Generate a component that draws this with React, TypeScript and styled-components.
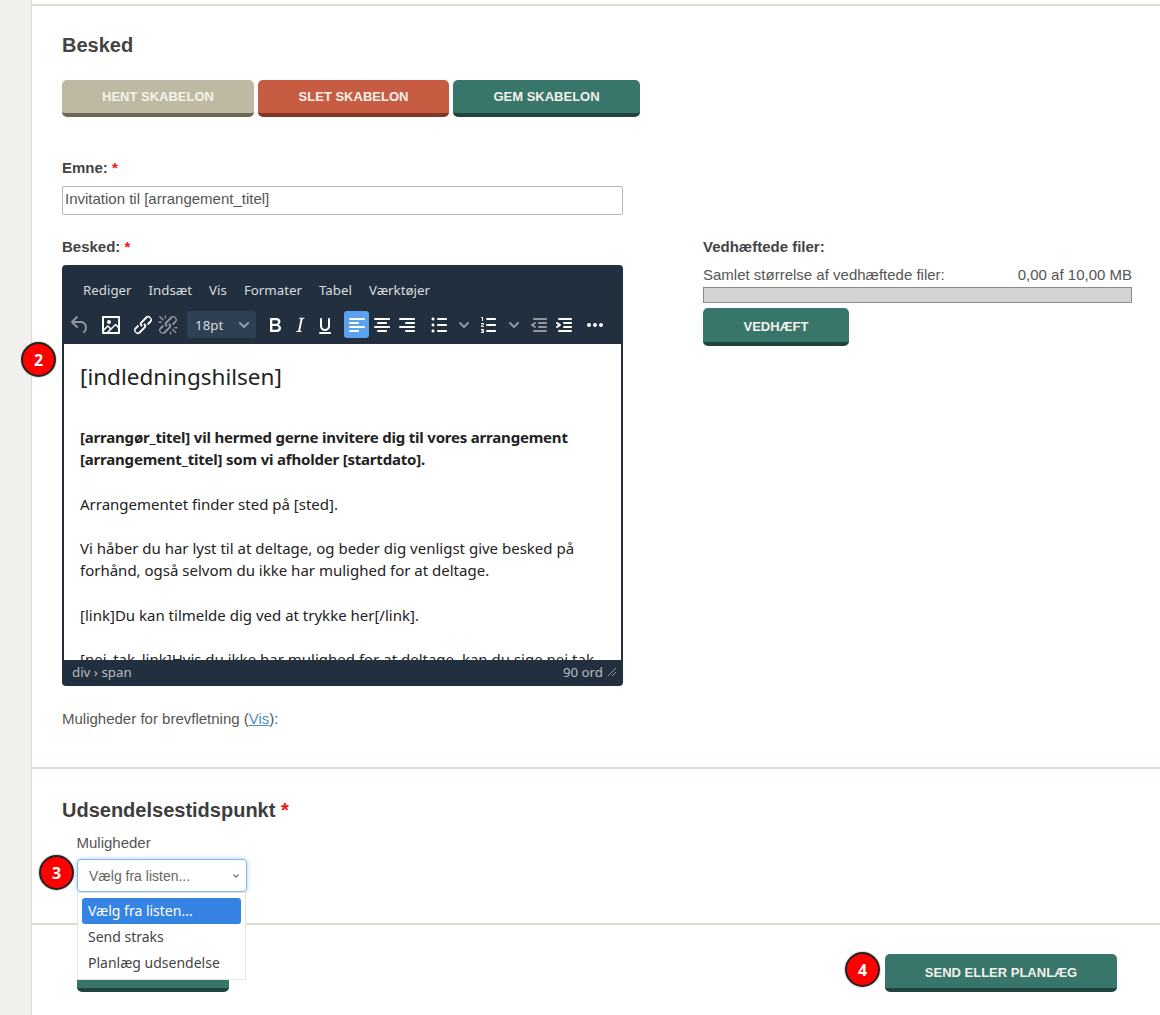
import styled, { createGlobalStyle } from 'styled-components';

const GlobalStyle = createGlobalStyle`
  html, body { margin: 0; padding: 0; background: #fff; }
  body { font-family: "Liberation Sans", Arial, sans-serif; color: #444; overflow: hidden; }
  * { box-sizing: border-box; }
`;

const ICONS: Record<string, string> = {
  undo: 'M6.4 8H12c3.7 0 6.2 2 6.8 5.1.6 2.7-.4 5.6-2.3 6.8a1 1 0 0 1-1-1.8c1.1-.6 1.8-2.7 1.4-4.6-.5-2.1-2.1-3.5-4.9-3.5H6.4l3.3 3.3a1 1 0 1 1-1.4 1.4l-5-5a1 1 0 0 1 0-1.4l5-5a1 1 0 0 1 1.4 1.4L6.4 8Z',
  image: 'm5 15.7 3.3-3.2c.3-.3.7-.3 1 0L12 15l4.1-4c.3-.4.8-.4 1 0l2 1.9V5H5v10.7ZM5 18V19h3l2.8-2.9-2-2L5 17.9Zm14-3-2.5-2.4-6.4 6.5H19v-4ZM4 3h16c.6 0 1 .4 1 1v16c0 .6-.4 1-1 1H4a1 1 0 0 1-1-1V4c0-.6.4-1 1-1Zm6 8a2 2 0 1 0 0-4 2 2 0 0 0 0 4Z',
  link: 'M6.2 12.3a1 1 0 0 1 1.4 1.4l-2 2a2 2 0 1 0 2.6 2.8l4.8-4.8a1 1 0 0 0 0-1.4 1 1 0 1 1 1.4-1.3 2.9 2.9 0 0 1 0 4L9.6 20a3.9 3.9 0 0 1-5.5-5.5l2-2Zm11.6-.6a1 1 0 0 1-1.4-1.4l2-2a2 2 0 1 0-2.6-2.8L11 10.3a1 1 0 0 0 0 1.4A1 1 0 1 1 9.6 13a2.9 2.9 0 0 1 0-4L14.4 4a3.9 3.9 0 0 1 5.5 5.5l-2 2Z',
  unlink: 'M6.2 12.3a1 1 0 0 1 1.4 1.4l-2.1 2a2 2 0 1 0 2.7 2.8l4.8-4.8a1 1 0 0 0 0-1.4 1 1 0 1 1 1.4-1.3 2.9 2.9 0 0 1 0 4.1l-4.8 4.8a3.9 3.9 0 0 1-5.5-5.5l2-2Zm11.6-.6a1 1 0 0 1-1.4-1.4l2.1-2a2 2 0 1 0-2.7-2.8L11 10.3a1 1 0 0 0 0 1.4A1 1 0 1 1 9.6 13a2.9 2.9 0 0 1 0-4.1l4.8-4.8a3.9 3.9 0 0 1 5.5 5.5l-2 2ZM7.6 6.3a.8.8 0 0 1-1 1.1L3.3 4.2a.7.7 0 1 1 1-1l3.2 3.1ZM5.1 8.6a.8.8 0 0 1 0 1.5H3a.8.8 0 0 1 0-1.5H5Zm5-3.5a.8.8 0 0 1-1.5 0V3a.8.8 0 0 1 1.5 0V5Zm6 11.8a.8.8 0 0 1 1-1l3.2 3.2a.8.8 0 0 1-1 1L16 17Zm-2.2 2a.8.8 0 0 1 1.5 0V21a.8.8 0 0 1-1.5 0V19Zm5-3.5a.7.7 0 1 1 0-1.5H21a.8.8 0 0 1 0 1.5H19Z',
  bold: 'M7.8 19c-.3 0-.5 0-.6-.2l-.2-.5V5.7c0-.2 0-.4.2-.5l.6-.2h5c1.5 0 2.7.3 3.5 1 .7.6 1.1 1.4 1.1 2.5a3 3 0 0 1-.6 1.9c-.4.6-1 1-1.6 1.2.4.1.9.3 1.3.6s.8.7 1 1.2c.4.4.5 1 .5 1.6 0 1.3-.4 2.3-1.3 3-.8.7-2.1 1-3.8 1H7.8Zm5-8.3c.6 0 1.2-.1 1.6-.5.4-.3.6-.7.6-1.3 0-1.1-.8-1.7-2.3-1.7H9.3v3.5h3.4Zm.5 6c.7 0 1.3-.1 1.7-.4.4-.4.6-.9.6-1.5s-.2-1-.7-1.4c-.4-.3-1-.4-2-.4H9.4v3.8h4Z',
  italic: 'm16.7 4.7-.1.9h-.3c-.6 0-1 0-1.4.3-.3.3-.4.6-.5 1.1l-2.1 9.8v.6c0 .5.4.8 1.4.8h.2l-.2.8H8l.2-.8h.2c1.1 0 1.8-.5 2-1.5l2-9.8.1-.5c0-.6-.4-.8-1.4-.8h-.3l.2-.9h5.8Z',
  underline: 'M16 5c.6 0 1 .4 1 1v7c0 2.8-2.2 5-5 5s-5-2.2-5-5V6c0-.6.4-1 1-1s1 .4 1 1v7c0 1.7 1.3 3 3 3s3-1.3 3-3V6c0-.6.4-1 1-1ZM7 19h10c.6 0 1 .4 1 1s-.4 1-1 1H7a1 1 0 1 1 0-2Z',
  left: 'M5 5h14c.6 0 1 .4 1 1s-.4 1-1 1H5a1 1 0 1 1 0-2Zm0 4h8c.6 0 1 .4 1 1s-.4 1-1 1H5a1 1 0 1 1 0-2Zm0 8h8c.6 0 1 .4 1 1s-.4 1-1 1H5a1 1 0 0 1 0-2Zm0-4h14c.6 0 1 .4 1 1s-.4 1-1 1H5a1 1 0 0 1 0-2Z',
  center: 'M5 5h14c.6 0 1 .4 1 1s-.4 1-1 1H5a1 1 0 1 1 0-2Zm3 4h8c.6 0 1 .4 1 1s-.4 1-1 1H8a1 1 0 1 1 0-2Zm0 8h8c.6 0 1 .4 1 1s-.4 1-1 1H8a1 1 0 0 1 0-2Zm-3-4h14c.6 0 1 .4 1 1s-.4 1-1 1H5a1 1 0 0 1 0-2Z',
  right: 'M5 5h14c.6 0 1 .4 1 1s-.4 1-1 1H5a1 1 0 1 1 0-2Zm6 4h8c.6 0 1 .4 1 1s-.4 1-1 1h-8a1 1 0 0 1 0-2Zm0 8h8c.6 0 1 .4 1 1s-.4 1-1 1h-8a1 1 0 0 1 0-2Zm-6-4h14c.6 0 1 .4 1 1s-.4 1-1 1H5a1 1 0 0 1 0-2Z',
  bullets: 'M11 5h8c.6 0 1 .4 1 1s-.4 1-1 1h-8a1 1 0 0 1 0-2Zm0 6h8c.6 0 1 .4 1 1s-.4 1-1 1h-8a1 1 0 0 1 0-2Zm0 6h8c.6 0 1 .4 1 1s-.4 1-1 1h-8a1 1 0 0 1 0-2ZM4.5 6c0-.4.1-.8.4-1 .3-.4.7-.5 1.1-.5.4 0 .8.1 1 .4.4.3.5.7.5 1.1 0 .4-.1.8-.4 1-.3.4-.7.5-1.1.5-.4 0-.8-.1-1-.4-.4-.3-.5-.7-.5-1.1Zm0 6c0-.4.1-.8.4-1 .3-.4.7-.5 1.1-.5.4 0 .8.1 1 .4.4.3.5.7.5 1.1 0 .4-.1.8-.4 1-.3.4-.7.5-1.1.5-.4 0-.8-.1-1-.4-.4-.3-.5-.7-.5-1.1Zm0 6c0-.4.1-.8.4-1 .3-.4.7-.5 1.1-.5.4 0 .8.1 1 .4.4.3.5.7.5 1.1 0 .4-.1.8-.4 1-.3.4-.7.5-1.1.5-.4 0-.8-.1-1-.4-.4-.3-.5-.7-.5-1.1Z',
  numbers: 'M10 17h8c.6 0 1 .4 1 1s-.4 1-1 1h-8a1 1 0 0 1 0-2Zm0-6h8c.6 0 1 .4 1 1s-.4 1-1 1h-8a1 1 0 0 1 0-2Zm0-6h8c.6 0 1 .4 1 1s-.4 1-1 1h-8a1 1 0 1 1 0-2ZM6 4v3.5c0 .3-.2.5-.5.5a.5.5 0 0 1-.5-.5V5h-.5a.5.5 0 0 1 0-1H6Zm-1 8.8.2.2h1.3c.3 0 .5.2.5.5s-.2.5-.5.5H4.9a1 1 0 0 1-.9-1V13c0-.4.3-.8.6-1l1.2-.4.2-.3a.2.2 0 0 0-.2-.2H4.5a.5.5 0 0 1-.5-.5c0-.3.2-.5.5-.5h1.6c.5 0 .9.4.9 1v.1c0 .4-.3.8-.6 1l-1.2.4-.2.3ZM7 17v2c0 .6-.4 1-1 1H4.5a.5.5 0 0 1 0-1h1.2c.2 0 .3-.1.3-.3 0-.2-.1-.3-.3-.3H4.4a.4.4 0 1 1 0-.8h1.3c.2 0 .3-.1.3-.3 0-.2-.1-.3-.3-.3H4.5a.5.5 0 1 1 0-1H6c.6 0 1 .4 1 1Z',
  outdent: 'M7 5h12c.6 0 1 .4 1 1s-.4 1-1 1H7a1 1 0 1 1 0-2Zm5 4h7c.6 0 1 .4 1 1s-.4 1-1 1h-7a1 1 0 0 1 0-2Zm0 4h7c.6 0 1 .4 1 1s-.4 1-1 1h-7a1 1 0 0 1 0-2Zm-5 4h12a1 1 0 0 1 0 2H7a1 1 0 0 1 0-2Zm1.6-3.8a1 1 0 0 1-1.2 1.6l-3-2a1 1 0 0 1 0-1.6l3-2a1 1 0 0 1 1.2 1.6L6.8 12l1.8 1.2Z',
  indent: 'M7 5h12c.6 0 1 .4 1 1s-.4 1-1 1H7a1 1 0 1 1 0-2Zm5 4h7c.6 0 1 .4 1 1s-.4 1-1 1h-7a1 1 0 0 1 0-2Zm0 4h7c.6 0 1 .4 1 1s-.4 1-1 1h-7a1 1 0 0 1 0-2Zm-5 4h12a1 1 0 0 1 0 2H7a1 1 0 0 1 0-2Zm-2.6-3.8L6.2 12l-1.8-1.2a1 1 0 0 1 1.2-1.6l3 2a1 1 0 0 1 0 1.6l-3 2a1 1 0 1 1-1.2-1.6Z',
  more: 'M6 10a2 2 0 0 0-2 2c0 1.1.9 2 2 2a2 2 0 0 0 2-2 2 2 0 0 0-2-2Zm12 0a2 2 0 0 0-2 2c0 1.1.9 2 2 2a2 2 0 0 0 2-2 2 2 0 0 0-2-2Zm-6 0a2 2 0 0 0-2 2c0 1.1.9 2 2 2a2 2 0 0 0 2-2 2 2 0 0 0-2-2Z',
  chevron: 'M7.3 9.3a1 1 0 0 1 1.4 0L12 12.6l3.3-3.3a1 1 0 1 1 1.4 1.4l-4 4a1 1 0 0 1-1.4 0l-4-4a1 1 0 0 1 0-1.4Z',
};

const Page = styled.div`
  display: flex;
  height: 1015px;
  overflow: hidden;
`;

const Sidebar = styled.div`
  width: 32px;
  flex: none;
  background: #f1f0ec;
  border-right: 1px solid #dddbd0;
`;

const Main = styled.main`
  flex: 1;
  min-width: 0;
  padding-top: 4px;
`;

const Section = styled.section<{ $height: number }>`
  height: ${(p) => p.$height}px;
  border-top: 2px solid #dedbcf;
  padding: 0 28px 0 30px;
  position: relative;
`;

const Heading = styled.h2`
  margin: 0;
  padding-top: 27px;
  font-size: 20px;
  line-height: 24px;
  font-weight: 700;
  color: #444;
`;

const ActionButton = styled.button<{ $bg: string; $edge: string; $width: number; $low?: boolean }>`
  width: ${(p) => p.$width}px;
  height: 38px;
  padding: ${(p) => (p.$low ? '3px' : '0')} 0 0;
  border: 0;
  border-bottom: 4px solid ${(p) => p.$edge};
  border-radius: 5px;
  background: ${(p) => p.$bg};
  color: #f3f1ea;
  font: 700 13px "Liberation Sans", Arial, sans-serif;
  text-transform: uppercase;
`;

const ButtonRow = styled.div`
  display: flex;
  gap: 4px;
  margin-top: 22.5px;

  ${ActionButton} {
    height: 37.5px;
  }
`;

const FieldLabel = styled.div`
  font-size: 15px;
  font-weight: 700;
  line-height: 18px;
  color: #444;
`;

const Required = styled.span`
  color: #f41414;
`;

const SubjectLabel = styled(FieldLabel)`
  margin-top: 42px;
`;

const SubjectInput = styled.div`
  width: 561px;
  height: 29px;
  margin-top: 9px;
  padding-left: 2px;
  border: 1.5px solid #b4b4bc;
  border-radius: 2px;
  font-size: 15px;
  line-height: 24px;
  color: #555;
`;

const Columns = styled.div`
  display: grid;
  grid-template-columns: 561px 429px;
  column-gap: 80px;
  margin-top: 23px;
`;

const EditorColumn = styled.div`
  position: relative;
`;

const Editor = styled.div`
  margin-top: 9px;
  height: 421px;
  display: flex;
  flex-direction: column;
  border: 2px solid #222f3e;
  border-radius: 4px;
  background: #222f3e;
  font-family: "Noto Sans", sans-serif;
  overflow: hidden;
`;

const MenuBar = styled.div`
  display: flex;
  gap: 17px;
  padding: 12px 0 0 19px;
  height: 44px;
  font-size: 13.3px;
  line-height: 22px;
  color: #d9dbde;
`;

const ToolBar = styled.div`
  display: flex;
  gap: 6.7px;
  height: 33px;
  padding: 0 0 0 3px;
  align-items: flex-start;
`;

const ToolGroup = styled.div`
  display: flex;
`;

const Tool = styled.div<{ $active?: boolean; $faded?: boolean }>`
  width: 25px;
  height: 27px;
  display: flex;
  align-items: center;
  justify-content: center;
  border-radius: 3px;
  background: ${(p) => (p.$active ? '#5aa2f0' : 'transparent')};
  color: ${(p) => (p.$faded ? 'rgba(255,255,255,.5)' : '#fff')};
`;

const SizeSelect = styled.div`
  width: 69px;
  height: 27px;
  display: flex;
  align-items: center;
  justify-content: space-between;
  padding-left: 8px;
  border-radius: 3px;
  background: #2f4055;
  color: #d9dbde;
  font-size: 13.3px;

  svg {
    opacity: 0.6;
  }
`;

const Content = styled.div`
  flex: 1;
  min-height: 0;
  overflow: hidden;
  background: #fff;
  padding: 16px 16px 0 16px;
  color: #222;
  font-size: 15px;
  line-height: 22.2px;

  strong {
    letter-spacing: -0.2px;
  }
`;

const Lead = styled.div`
  font-size: 22.5px;
  line-height: 33px;
  margin-bottom: 33px;
`;

const Para = styled.p`
  margin: 0 0 22.2px;
`;

const StatusBar = styled.div`
  height: 24px;
  flex: none;
  display: flex;
  align-items: center;
  justify-content: space-between;
  padding: 0 4px 0 8px;
  font-size: 13.3px;
  color: #b6bbc1;
`;

const WordCount = styled.div`
  display: flex;
  align-items: center;
  gap: 4px;
`;

const MergeNote = styled.div`
  margin-top: 24px;
  font-size: 15px;
  line-height: 18px;
  color: #555;
`;

const MergeLink = styled.a`
  color: #4a90c4;
  text-decoration: underline;
`;

const Attachments = styled.div`
  display: flex;
  flex-direction: column;
`;

const SizeLine = styled.div`
  display: flex;
  justify-content: space-between;
  margin-top: 10px;
  font-size: 15px;
  line-height: 18px;
  color: #555;
`;

const Progress = styled.div`
  height: 16px;
  margin-top: 3px;
  margin-bottom: 5px;
  border: 1px solid #8b8b8b;
  background: #d3d3d3;
`;

const Badge = styled.div<{ $left: number; $top: number }>`
  position: absolute;
  left: ${(p) => p.$left}px;
  top: ${(p) => p.$top}px;
  width: 35px;
  height: 35px;
  border-radius: 50%;
  display: flex;
  align-items: center;
  justify-content: center;
  background: #f00;
  border: 2px solid #222;
  box-shadow: 0 0 0 1px #ddd;
  color: #fff;
  font: 700 16px "Noto Sans", sans-serif;
`;

const TimingHeading = styled(Heading)`
  padding-top: 29px;
  font-size: 20px;
  color: #3d3d3d;
`;

const TimingBody = styled.div`
  margin-left: 15px;
  margin-top: 12px;
  width: 170px;
  position: relative;
`;

const PlainLabel = styled.div`
  font-size: 15px;
  line-height: 18px;
  color: #555;
  margin-left: -0.5px;
`;

const SelectBox = styled.div`
  height: 33px;
  margin-top: 7px;
  padding: 0 3px 0 11px;
  display: flex;
  align-items: center;
  justify-content: space-between;
  background: #fff;
  border: 1px solid #86b7e8;
  border-radius: 4px;
  box-shadow: 0 0 4px rgba(90, 160, 240, 0.55);
  font: 14px "Liberation Sans", sans-serif;
  color: #666;
`;

const OptionList = styled.div`
  position: absolute;
  left: 0;
  top: 58px;
  width: 169px;
  height: 88px;
  padding: 5px 4px;
  background: #fff;
  border: 1px solid #e4e4e4;
  z-index: 3;
  font: 14px "Noto Sans", sans-serif;
  color: #444;
`;

const Option = styled.div<{ $selected?: boolean }>`
  height: 26px;
  line-height: 26px;
  padding-left: 6px;
  border-radius: 3px;
  background: ${(p) => (p.$selected ? '#3584e4' : 'transparent')};
  color: ${(p) => (p.$selected ? '#fff' : '#444')};
`;

const FooterRow = styled.div`
  display: flex;
  justify-content: space-between;
  padding: 29px 15px 0 15px;
`;

const Icon = ({ name, size = 24 }: { name: string; size?: number }) => (
  <svg width={size} height={size} viewBox="0 0 24 24" fill="currentColor">
    <path d={ICONS[name]} />
  </svg>
);

const Resize = () => (
  <svg width="10" height="10" viewBox="0 0 10 10" stroke="#8c949d" strokeWidth="1" fill="none">
    <path d="M1 9 9 1M5 9l4-4" />
  </svg>
);

const toolbar = [
  [{ name: 'undo', faded: true }],
  [{ name: 'image' }],
  [{ name: 'link' }, { name: 'unlink', faded: true }],
];

const formatting = [
  [{ name: 'bold' }, { name: 'italic' }, { name: 'underline' }],
  [{ name: 'left', active: true }, { name: 'center' }, { name: 'right' }],
  [
    { name: 'bullets' },
    { name: 'chevron', faded: true },
    { name: 'numbers' },
    { name: 'chevron', faded: true },
    { name: 'outdent', faded: true },
    { name: 'indent' },
  ],
  [{ name: 'more' }],
];

type ToolDef = { name: string; faded?: boolean; active?: boolean };

const Group = ({ tools }: { tools: ToolDef[] }) => (
  <ToolGroup>
    {tools.map((t, i) => (
      <Tool key={i} $active={t.active} $faded={t.faded}>
        <Icon name={t.name} />
      </Tool>
    ))}
  </ToolGroup>
);

export default function App() {
  return (
    <>
      <GlobalStyle />
      <Page>
        <Sidebar />
        <Main>
          <Section $height={763}>
            <Heading>Besked</Heading>
            <ButtonRow>
              <ActionButton $bg="#bfb9a3" $edge="#6b6755" $width={192}>Hent skabelon</ActionButton>
              <ActionButton $bg="#c85c42" $edge="#7f3824" $width={191}>Slet skabelon</ActionButton>
              <ActionButton $bg="#38756b" $edge="#1f443e" $width={187}>Gem skabelon</ActionButton>
            </ButtonRow>
            <SubjectLabel>Emne: <Required>*</Required></SubjectLabel>
            <SubjectInput>Invitation til [arrangement_titel]</SubjectInput>
            <Columns>
              <EditorColumn>
                <FieldLabel>Besked: <Required>*</Required></FieldLabel>
                <Badge $left={-41} $top={104}>2</Badge>
                <Editor>
                  <MenuBar>
                    <span>Rediger</span>
                    <span>Indsæt</span>
                    <span>Vis</span>
                    <span>Formater</span>
                    <span>Tabel</span>
                    <span>Værktøjer</span>
                  </MenuBar>
                  <ToolBar>
                    {toolbar.map((g, i) => <Group key={i} tools={g} />)}
                    <SizeSelect>
                      18pt
                      <Icon name="chevron" />
                    </SizeSelect>
                    {formatting.map((g, i) => <Group key={i} tools={g} />)}
                  </ToolBar>
                  <Content>
                    <Lead>[indledningshilsen]</Lead>
                    <Para>
                      <strong>
                        [arrangør_titel] vil hermed gerne invitere dig til vores arrangement [arrangement_titel] som vi afholder [startdato].
                      </strong>
                    </Para>
                    <Para>Arrangementet finder sted på [sted].</Para>
                    <Para>
                      Vi håber du har lyst til at deltage, og beder dig venligst give besked på forhånd, også selvom du ikke har mulighed for at deltage.
                    </Para>
                    <Para>[link]Du kan tilmelde dig ved at trykke her[/link].</Para>
                    <Para>[nej_tak_link]Hvis du ikke har mulighed for at deltage, kan du sige nej tak</Para>
                  </Content>
                  <StatusBar>
                    <span>div › span</span>
                    <WordCount>
                      90 ord
                      <Resize />
                    </WordCount>
                  </StatusBar>
                </Editor>
                <MergeNote>
                  Muligheder for brevfletning (<MergeLink href="#">Vis</MergeLink>):
                </MergeNote>
              </EditorColumn>
              <Attachments>
                <FieldLabel>Vedhæftede filer:</FieldLabel>
                <SizeLine>
                  <span>Samlet størrelse af vedhæftede filer:</span>
                  <span>0,00 af 10,00 MB</span>
                </SizeLine>
                <Progress />
                <ActionButton $bg="#38756b" $edge="#1f443e" $width={146} $low>Vedhæft</ActionButton>
              </Attachments>
            </Columns>
          </Section>
          <Section $height={156}>
            <TimingHeading>Udsendelsestidspunkt <Required>*</Required></TimingHeading>
            <TimingBody>
              <PlainLabel>Muligheder</PlainLabel>
              <Badge $left={-38} $top={21}>3</Badge>
              <SelectBox>
                Vælg fra listen...
                <Icon name="chevron" size={14} />
              </SelectBox>
              <OptionList>
                <Option $selected>Vælg fra listen...</Option>
                <Option>Send straks</Option>
                <Option>Planlæg udsendelse</Option>
              </OptionList>
            </TimingBody>
          </Section>
          <Section $height={100}>
            <FooterRow>
              <ActionButton $bg="#38756b" $edge="#1f443e" $width={152} $low>Tilbage</ActionButton>
              <ActionButton $bg="#38756b" $edge="#1f443e" $width={232} $low>Send eller planlæg</ActionButton>
            </FooterRow>
            <Badge $left={813} $top={27}>4</Badge>
          </Section>
        </Main>
      </Page>
    </>
  );
}
